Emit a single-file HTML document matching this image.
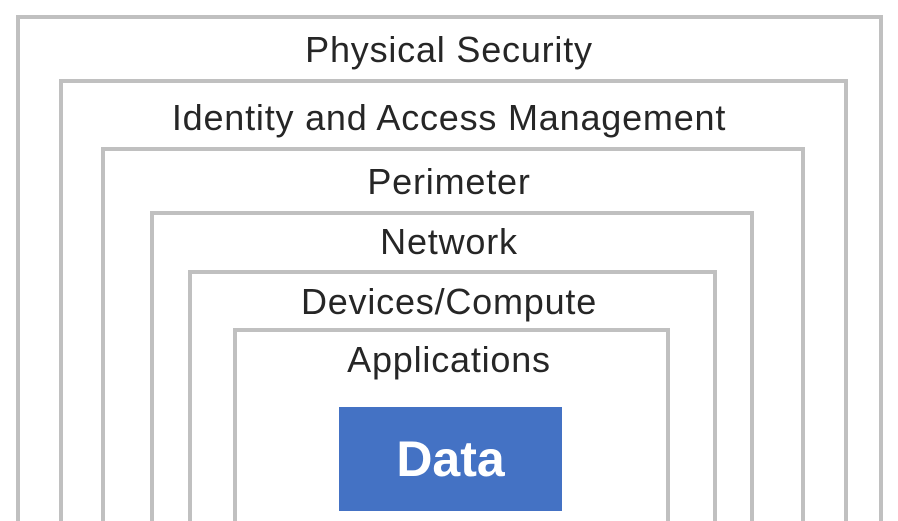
<!DOCTYPE html>
<html style="margin:0;width:898px;height:521px;overflow:hidden"><head><style>
body{margin:0;width:898px;height:521px;background:#fff;position:relative;overflow:hidden;font-family:"Liberation Sans",sans-serif;}
.r{position:absolute;border:4px solid #c0c0c0;border-bottom:none;box-sizing:border-box;bottom:0;}
.t{position:absolute;left:0;width:898px;text-align:center;font-size:36px;line-height:36px;color:#262626;letter-spacing:0.8px;}
</style></head><body>
<div class="r" style="left:16px;top:15px;width:867px"></div>
<div class="r" style="left:59px;top:79px;width:789px"></div>
<div class="r" style="left:101px;top:147px;width:704px"></div>
<div class="r" style="left:150px;top:211px;width:604px"></div>
<div class="r" style="left:188px;top:270px;width:529px"></div>
<div class="r" style="left:233px;top:328px;width:437px"></div>
<div style="position:absolute;left:339px;top:407px;width:223px;height:104px;background:#4472c4;color:#fff;font-weight:bold;font-size:50px;line-height:104px;text-align:center;">Data</div>
<div class="t" style="top:32px">Physical Security</div>
<div class="t" style="top:100px">Identity and Access Management</div>
<div class="t" style="top:164px">Perimeter</div>
<div class="t" style="top:224px">Network</div>
<div class="t" style="top:284px">Devices/Compute</div>
<div class="t" style="top:342px">Applications</div>
</body></html>
